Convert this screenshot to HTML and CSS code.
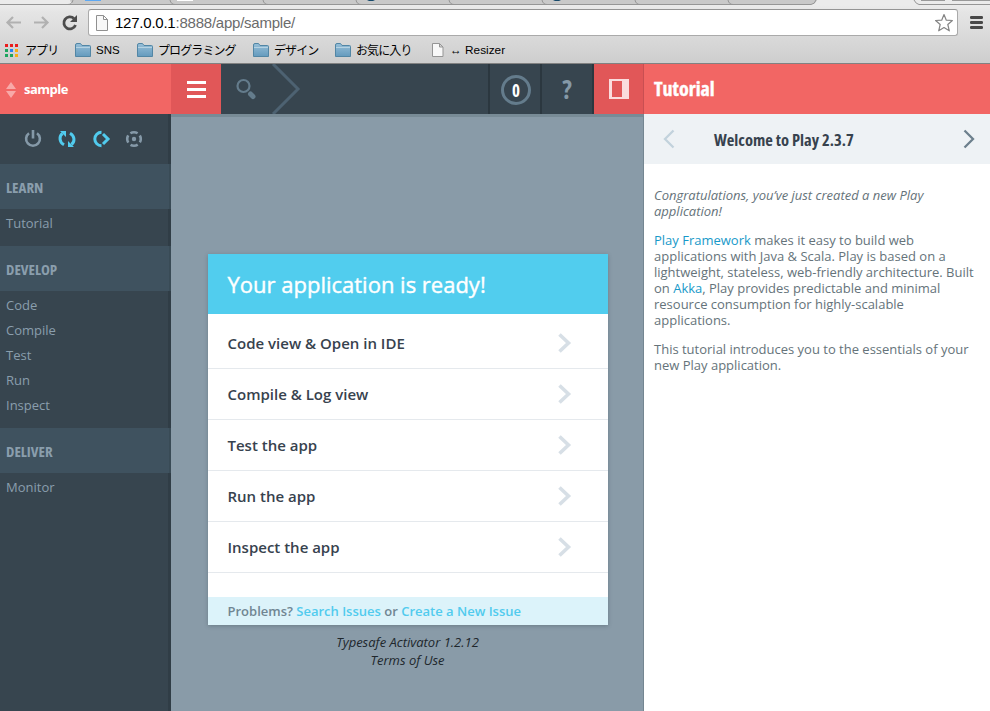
FILE: index.html
```html
<!DOCTYPE html>
<html lang="ja">
<head>
<meta charset="utf-8">
<title>sample</title>
<link rel="stylesheet" href="styles.css">
</head>
<body>
<div class="browser">
  <svg class="tabs" width="990" height="5" viewBox="0 0 990 5">
    <path d="M0 0H70Q71 4.5 75 4.500H811Q815 4 817 0Z" fill="#c9c9c9"/>
    <path d="M0 4.500H811Q815 4 816 0M914 0Q916 4 919 4.500H990M73 0Q72 4.500 68 4.500M170 0Q171 4.500 175 4.500M263 0Q264 4.500 268 4.500M356 0Q357 4.500 361 4.500M449 0Q450 4.500 454 4.500M542 0Q543 4.500 547 4.500M635 0Q636 4.500 640 4.500M728 0Q729 4.500 733 4.500" fill="none" stroke="#969696"/>
    <path d="M85 0h16v1H85z" fill="#5da8f2"/><path d="M177 0h16v1h-16z" fill="#fff"/>
    <path d="M367 0h8l-2 1h-4zM553 0h8l-2 1h-4z" fill="#174a6b"/>
    <path d="M921 0h24v1h-24zM952 0h38v1h-38z" fill="#999"/>
  </svg>
  <div class="toolbar">
    <svg class="nav" width="84" height="28" viewBox="0 0 84 28">
      <g fill="none" stroke="#b1b1b1" stroke-width="2.200"><path d="M21 14.500H8M13 9L7.500 14.500 13 20M34 14.500h14M42 9l5.500 5.500L42 20"/></g>
      <path d="M75.500 17A6 6 0 1 1 74 10.500" fill="none" stroke="#4c4c4c" stroke-width="2.800"/><path d="M77 7v7h-7z" fill="#4c4c4c"/>
    </svg>
    <div class="address">
      <svg class="page" width="12" height="16" viewBox="0 0 12 16"><path d="M.5.5h7l4 4v11H.5zM7.500.5v4h4" fill="#f8f8f8" stroke="#909090"/></svg>
      <span class="url"><b>127.0.0.1</b>:8888/app/sample/</span>
      <svg class="star" width="20" height="20" viewBox="0 0 20 20"><path d="M10 1.500l2.300 5.700 6.100.3-4.600 4 1.500 6.300-5.300-3.300-5.300 3.300 1.500-6.300-4.600-4 6.100-.3z" fill="#fff" stroke="#858585" stroke-width="1.200" stroke-linejoin="round"/></svg>
    </div>
    <svg class="wrench" width="13" height="13" viewBox="0 0 13 13"><path d="M1.300 1.500h10.400M1.300 6.500h10.400M1.300 11.500h10.400" stroke="#484848" stroke-width="2.800" stroke-linecap="round"/></svg>
  </div>
  <svg class="defs" width="0" height="0"><defs>
    <linearGradient id="fold" x2="0" y2="1"><stop stop-color="#97bfd8"/><stop offset="1" stop-color="#649abd"/></linearGradient>
    <symbol id="folder" viewBox="0 0 16 14"><path d="M.5 13.500V2Q.5.500 2 .5h3.500L7 2.500h7.500q1 0 1 1v10z" fill="url(#fold)" stroke="#5286a5"/><path d="M1 4.500h14" stroke="#b5d2e2"/></symbol>
  </defs></svg>
  <div class="bookmarks">
    <svg class="apps" width="13" height="13" viewBox="0 0 13 13"><path d="M0 0h3v3H0zM5 0h3v3H5zM10 0h3v3h-3z" fill="#ea1d1d"/><path d="M0 5h3v3H0zM0 10h3v3H0z" fill="#1da55e"/><path d="M5 5h3v3H5z" fill="#2484f3"/><path d="M10 5h3v3h-3zM10 10h3v3h-3z" fill="#f7ae14"/><path d="M5 10h3v3H5z" fill="#1da55e"/></svg>
    <span class="bm kana bm-apps">アプリ</span>
    <svg width="16" height="14"><use href="#folder"/></svg><span class="bm bm-sns">SNS</span>
    <svg width="16" height="14"><use href="#folder"/></svg><span class="bm kana bm-prog">プログラミング</span>
    <svg width="16" height="14"><use href="#folder"/></svg><span class="bm kana bm-design">デザイン</span>
    <svg width="16" height="14"><use href="#folder"/></svg><span class="bm kana bm-fav">お気に入り</span>
    <svg width="12" height="14" viewBox="0 0 12 14"><path d="M.5.500h7l3.500 3.500v9.500H.5zM7.500.5V4H11" fill="#f8f8f8" stroke="#959595"/></svg><span class="bm bm-resizer">↔ Resizer</span>
  </div>
</div>
<div class="app">
  <aside class="side">
    <div class="project">
      <svg width="10" height="16" viewBox="0 0 10 16"><path d="M5 0l5 7H0zM0 9h10l-5 7z" fill="#f8a9a8"/></svg>
      <span class="project-name">sample</span>
    </div>
    <div class="tools">
      <svg width="18" height="18" viewBox="0 0 18 18" fill="none" stroke="#8599a8" stroke-width="2.600"><path d="M5 3.200A6.900 6.900 0 1 0 13 3.200M9 0v8.500"/></svg>
      <svg width="18" height="18" viewBox="0 0 18 18"><path d="M6 14.800C1 12 1 6 4.500 3.500M12 3.200C17 6 17 12 13.500 14.500" fill="none" stroke="#51cbee" stroke-width="3"/><path d="M2 1h6v6zM16 17h-6v-6z" fill="#51cbee"/></svg>
      <svg width="19" height="18" viewBox="0 0 19 18" fill="none" stroke="#51cbee" stroke-width="3"><path d="M9.500 2.300A6.700 6.700 0 0 0 9.500 15.700M11 4l5 5-5 5"/></svg>
      <svg class="target" width="18" height="18" viewBox="0 0 18 18"><circle cx="9" cy="9" r="6.800" fill="none" stroke="#8599a8" stroke-width="2.600" stroke-dasharray="7.600 3.080" stroke-dashoffset="4"/><circle cx="9" cy="9" r="2.200" fill="#8599a8"/></svg>
    </div>
    <h2><span>LEARN</span></h2>
    <ul><li>Tutorial</li></ul>
    <h2><span>DEVELOP</span></h2>
    <ul><li>Code</li><li>Compile</li><li>Test</li><li>Run</li><li>Inspect</li></ul>
    <h2><span>DELIVER</span></h2>
    <ul><li>Monitor</li></ul>
  </aside>
  <main class="main">
    <div class="topbar">
      <div class="menu"><svg width="19" height="17" viewBox="0 0 19 17"><path d="M0 0h19v3H0zM0 7h19v3H0zM0 14h19v3H0z" fill="#fff"/></svg></div>
      <div class="search">
        <svg width="82" height="50" viewBox="0 0 82 50" fill="none"><path d="M52 0l25 25-25 25" stroke="#4d6272" stroke-width="3"/><circle cx="22.500" cy="22" r="6" stroke="#647c8c" stroke-width="2.200"/><path d="M29.500 30l2.500 2.500" stroke="#647c8c" stroke-width="5" stroke-linecap="round"/></svg>
      </div>
      <div class="cell"><span class="count"><span>0</span></span></div>
      <div class="cell help"><span>?</span></div>
      <div class="panel"><svg width="20" height="20" viewBox="0 0 20 20"><path d="M0 0h20v20H0zM3 2v16h10V2z" fill="#fadcdd" fill-rule="evenodd"/></svg></div>
    </div>
    <div class="stage">
      <section class="card">
        <h1><span>Your application is ready!</span></h1>
        <div class="row"><span>Code view &amp; Open in IDE</span><svg width="14" height="20"><use href="#chev"/></svg></div>
        <div class="row"><span>Compile &amp; Log view</span><svg width="14" height="20"><use href="#chev"/></svg></div>
        <div class="row"><span>Test the app</span><svg width="14" height="20"><use href="#chev"/></svg></div>
        <div class="row"><span>Run the app</span><svg width="14" height="20"><use href="#chev"/></svg></div>
        <div class="row"><span>Inspect the app</span><svg width="14" height="20"><use href="#chev"/></svg></div>
        <div class="problems"><span>Problems? <a>Search Issues</a> or <a>Create a New Issue</a></span></div>
      </section>
      <div class="about">Typesafe Activator 1.2.12<br>Terms of Use</div>
    </div>
  </main>
  <aside class="tutorial">
    <div class="tut-title"><span>Tutorial</span></div>
    <div class="tut-nav">
      <svg width="12" height="20" viewBox="0 0 12 20" fill="none" stroke="#c2d2dc" stroke-width="2.300"><path d="M10.500 1.500L2 10l8.500 8.500"/></svg>
      <span>Welcome to Play 2.3.7</span>
      <svg width="12" height="20" viewBox="0 0 12 20" fill="none" stroke="#6d808d" stroke-width="2.300"><path d="M1.500 1.500L10 10l-8.500 8.500"/></svg>
    </div>
    <div class="tut-body">
      <p><em>Congratulations, you’ve just created a new Play<br>application!</em></p>
      <p><a>Play Framework</a> makes it easy to build web<br>applications with Java &amp; Scala. Play is based on a<br>lightweight, stateless, web-friendly architecture. Built<br>on <a>Akka</a>, Play provides predictable and minimal<br>resource consumption for highly-scalable<br>applications.</p>
      <p>This tutorial introduces you to the essentials of your<br>new Play application.</p>
    </div>
  </aside>
</div>
<svg class="defs" width="0" height="0"><defs><symbol id="chev" viewBox="0 0 14 20"><path d="M1.500 1.500l9 8.500-9 8.500" fill="none" stroke="#d7dfe6" stroke-width="3.600"/></symbol></defs></svg>
</body>
</html>
```
FILE: styles.css
```css
* { box-sizing: border-box; }
body { margin: 0; width: 990px; height: 711px; overflow: hidden; font-family: "Open Sans", sans-serif; }
svg { display: block; flex: none; }
.defs { position: absolute; }
span { white-space: nowrap; }
.browser { height: 64px; background: linear-gradient(#ebebeb 5px, #e5e5e5 12px, #cecece 62px); border-bottom: 1px solid #818181; font-family: "Liberation Sans", "Noto Sans CJK JP", sans-serif; }
.toolbar { height: 32px; display: flex; padding-top: 4px; }
.nav { margin-right: 4px; margin-top: -1px; }
.address { width: 870px; height: 27px; background: #fff; border: 1px solid #aaa; border-top-color: #949494; border-radius: 3px; display: flex; align-items: center; padding: 0 3px 0 7px; }
.url { margin-left: 7px; font-size: 15px; color: #6b6b6b; flex: 1; letter-spacing: -.23px; }
.url b { font-weight: 400; color: #000; }
.wrench { margin: 7px 0 0 12px; }
.bookmarks { height: 26px; display: flex; align-items: center; padding: 0 0 0 5px; font-size: 12px; }
.bm { margin-left: 5px; color: #000; }
.kana { letter-spacing: -.9px; margin-top: -2px; }
.bm-apps { width: 50px; margin-left: 7px; }
.bm-sns { width: 41px; font-size: 11.5px; }
.bm-prog { width: 95px; }
.bm-design { width: 61px; }
.bm-fav { width: 76px; }
.bm-resizer { margin-left: 6px; font-size: 11.8px; }
.app { height: 647px; display: flex; }
.side { width: 171px; background: #37454f; box-shadow: inset -3px 0 #303d46; color: #8a9ead; }
.project { height: 50px; background: #f26664; color: #fff; display: flex; align-items: center; padding: 2px 0 0 6px; font-size: 13px; font-weight: 700; }
.project-name { margin: -2px 0 0 8px; letter-spacing: -.5px; }
.tools { height: 50px; display: flex; align-items: center; gap: 16px; padding-left: 24px; }
.target { margin-left: -2px; }
h2 { height: 45px; margin: 0; padding: 0 0 0 6px; background: #3f525f; border-right: 2px solid #394b56; font-size: 15px; line-height: 46px; font-weight: 700; font-stretch: 75%; }
ul { list-style: none; margin: 0; padding: 2px 0 10px 6px; font-size: 13px; }
li { height: 25px; line-height: 25px; }
.main { width: 473px; background: #899ba8; display: flex; flex-direction: column; }
.topbar { height: 50px; background: #37454f; display: flex; }
.menu { width: 50px; background: #e15758; display: grid; place-items: center; }
.search { width: 267px; }
.cell { width: 52px; border-left: 2px solid #2b373f; display: grid; place-items: center; }
.count { width: 30px; height: 30px; margin-top: 2px; margin-left: 2px; border: 3px solid #647c8c; border-radius: 50%; display: grid; place-items: center; color: #fff; font-size: 17px; font-weight: 700; font-stretch: 75%; }
.count, .help { line-height: 1; }
.help { width: 54px; border-right: 2px solid #2b373f; color: #8599a8; font-size: 26px; font-weight: 700; font-stretch: 75%; }
.panel { width: 50px; background: #e15758; border-right: 1px solid #c94f52; display: grid; place-items: center; }
.stage { flex: 1; border-top: 3px solid #788b96; border-right: 1px solid #748691; padding: 137px 0 0 37px; }
.card { width: 400px; height: 371px; background: #fff; box-shadow: 0 1px 4px rgba(40,55,65,.3); }
h1 { margin: 0 0 4px; height: 60px; line-height: 61px; padding-left: 19.5px; background: #51cdee; color: #fff; font-size: 22px; font-weight: 400; -webkit-text-stroke: .4px #fff; }
.row { height: 51px; border-bottom: 1px solid #e5e9ed; padding: 0 36px 0 19.5px; display: flex; align-items: center; justify-content: space-between; font-size: 15px; font-weight: 600; color: #37424e; }
.problems { height: 28px; margin-top: 24px; padding-left: 19.5px; background: #dcf3fa; font-size: 13px; font-weight: 600; line-height: 28px; color: #708692; }
.problems a { color: #51cbee; }
.about { width: 399px; padding-top: 8px; text-align: center; font-size: 13px; line-height: 18px; font-style: italic; color: #20272c; }
.tutorial { width: 346px; background: #fff; }
.tut-title { height: 50px; line-height: 50px; padding-left: 10px; background: #f26664; color: #fff; font-size: 20px; font-weight: 700; font-stretch: 75%; -webkit-text-stroke: .4px #fff; }
.tut-nav { height: 50px; background: #eef2f5; display: flex; align-items: center; padding: 0 15px 0 19px; color: #37424e; font-size: 16.5px; font-weight: 700; font-stretch: 75%; }
.tut-nav span { margin-left: 39px; flex: 1; }
.tut-body { padding: 23px 0 0 10px; font-size: 13px; line-height: 16px; color: #65737a; }
.tut-body p { margin: 0 0 13px; white-space: nowrap; }
.tut-body a { color: #1899c9; }
```
